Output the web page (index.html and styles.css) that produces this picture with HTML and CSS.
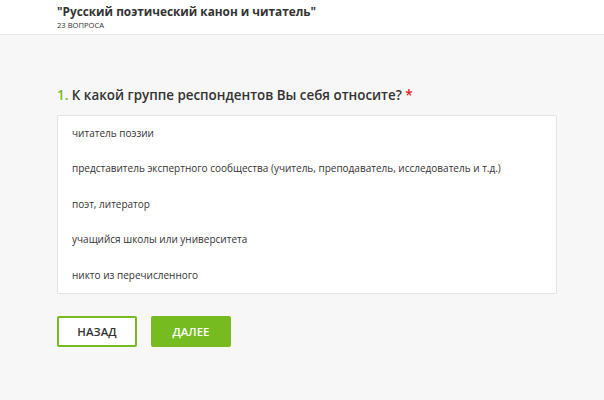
FILE: index.html
```html
<!DOCTYPE html>
<html lang="ru">
<head>
    <meta charset="UTF-8">
    <meta name="viewport" content="width=device-width, initial-scale=1.0">
    <title>Русский поэтический канон и читатель</title>
    <link rel="stylesheet" href="styles.css">
</head>
<body>
    <header class="top">
        <h1 class="survey-title">"Русский поэтический канон и читатель"</h1>
        <p class="survey-count">23 ВОПРОСА</p>
    </header>
    <main class="content">
        <h2 class="question"><span class="num">1.</span> К какой группе респондентов Вы себя относите? <span class="req">*</span></h2>
        <ul class="options">
            <li>читатель поэзии</li>
            <li>представитель экспертного сообщества (учитель, преподаватель, исследователь и т.д.)</li>
            <li>поэт, литератор</li>
            <li>учащийся школы или университета</li>
            <li>никто из перечисленного</li>
        </ul>
        <div class="nav">
            <button class="btn btn-back">НАЗАД</button>
            <button class="btn btn-next">ДАЛЕЕ</button>
        </div>
    </main>
</body>
</html>
```

FILE: styles.css
```css
body {
    margin: 0;
    background: #f7f7f7;
    font-family: 'Open Sans', 'DejaVu Sans', sans-serif;
    color: #2b2b2b;
}
.top {
    background: #fff;
    border-bottom: 1px solid #e6e6e6;
    padding: 4px 57px 5px;
    height: 25px;
}
.survey-title {
    margin: 0;
    font-size: 11.8px;
    font-weight: 700;
    line-height: 15px;
    color: #333;
}
.survey-count {
    margin: 2px 0 0;
    font-size: 7.6px;
    line-height: 9px;
    color: #333;
}
.content {
    padding: 50px 47px 0 57px;
}
.question {
    margin: 0;
    font-size: 13.4px;
    font-weight: 600;
    line-height: 20px;
    color: #333;
}
.num { color: #76bc21; }
.req { color: #e02020; }
.options {
    list-style: none;
    margin: 10px 0 0;
    padding: 0 14px;
    background: #fff;
    border: 1px solid #e4e4e4;
    border-radius: 2px;
}
.options li {
    font-size: 10px;
    line-height: 35.4px;
    color: #333;
}
.nav {
    display: flex;
    gap: 14px;
    margin-top: 22px;
}
.btn {
    width: 80px;
    height: 31px;
    font-family: 'Open Sans', 'DejaVu Sans', sans-serif;
    font-size: 11.5px;
    font-weight: 600;
    border-radius: 2px;
    cursor: pointer;
}
.btn-back {
    background: #fff;
    border: 2px solid #76bc21;
    color: #333;
}
.btn-next {
    background: #76bc21;
    border: 2px solid #76bc21;
    color: #fff;
}
```
